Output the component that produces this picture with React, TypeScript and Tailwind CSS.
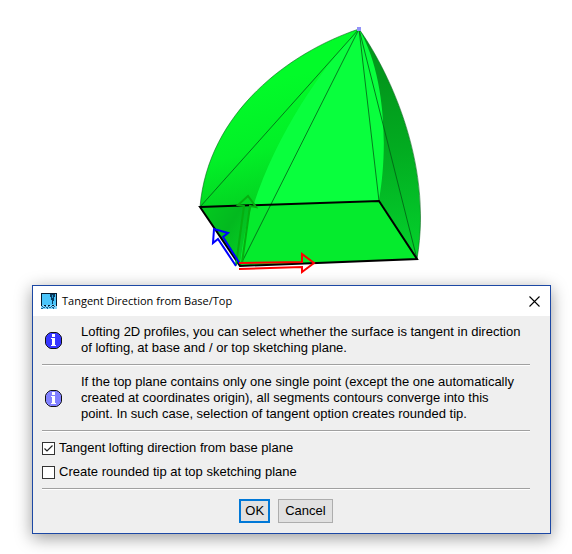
import type { ReactNode } from "react";

function LoftPreview() {
  return (
    <svg viewBox="0 0 572 285" className="block h-[285px] w-full" role="img" aria-label="Lofted solid">
      <defs>
        <linearGradient id="left" gradientUnits="userSpaceOnUse" x1="235" y1="90" x2="275" y2="245">
          <stop offset="0" stopColor="#02fb29" />
          <stop offset="0.4" stopColor="#02f027" />
          <stop offset="0.7" stopColor="#03d522" />
          <stop offset="1" stopColor="#03b01b" />
        </linearGradient>
        <linearGradient id="right" gradientUnits="userSpaceOnUse" x1="385" y1="80" x2="400" y2="250">
          <stop offset="0" stopColor="#02981c" />
          <stop offset="0.4" stopColor="#02ab20" />
          <stop offset="0.75" stopColor="#03c027" />
          <stop offset="1" stopColor="#04d02b" />
        </linearGradient>
        <linearGradient id="corner" gradientUnits="userSpaceOnUse" x1="205" y1="208" x2="248" y2="235">
          <stop offset="0" stopColor="#03c81f" />
          <stop offset="0.6" stopColor="#03b91f" />
          <stop offset="1" stopColor="#04c823" />
        </linearGradient>
      </defs>

      <path d="M359 29C290 52 208 112 200 207L240 266L320 200Z" fill="url(#left)" />
      <path d="M359 29C385 65 434 160 417 259L379 200L370 60Z" fill="url(#right)" />
      <path d="M200 207L240 266L262 205Z" fill="url(#corner)" />
      <path d="M359 29C310 80 250 175 240 266L417 259L379 200C388 150 386 75 359 29Z" fill="#09ff3d" />
      <path d="M252 205L379 201L417 259L240 266Q243 234 252 205Z" fill="#05eb2d" />

      <g fill="none" stroke="#045d15" strokeWidth="1" strokeOpacity="0.8">
        <path d="M359 29C290 52 208 112 200 207M359 29C385 65 434 160 417 259" strokeOpacity="0.55" />
        <path d="M359 29L200 207M359 29L240 266M359 29L379 201M359 29L417 259" />
      </g>
      <path d="M200 207L379 201L417 259L240 266Z" fill="none" stroke="#000" strokeWidth="2" />

      <path
        d="M236 265L244 206L238 205L248 196L256 207L250 206L242 263"
        fill="none"
        stroke="#06ae10"
        strokeWidth="2"
      />
      <path
        d="M236 266L218 239L213 243L214 229L228 233L223 237L240 264"
        fill="none"
        stroke="#00f"
        strokeWidth="2"
      />
      <path d="M239 263L302 262V254L314 263L302 272V267L239 269" fill="none" stroke="#f00" strokeWidth="2" />
      <path d="M357 27h4v4h-4z" fill="#9292f8" />
    </svg>
  );
}

function AppIcon() {
  return (
    <svg viewBox="0 0 16 16" className="size-4 shrink-0" aria-hidden="true" shapeRendering="crispEdges">
      <path d="M0 0h16v16H0z" fill="#061c30" />
      <path d="M1 1h14v11H1z" fill="#4bc5fa" />
      <path d="M0 13h1v-1h2v1h2v-1h2v1h2v-1h2v1h2v-1h2v1h1v3H0z" fill="#8ad6fa" />
      <path d="M1 13h1v1H1zM4 13h1v1H4zM7 13h1v1H7zM10 13h1v1h-1zM13 13h1v1h-1zM2 14h2v1H2zM5 14h2v1H5zM8 14h2v1H8zM11 14h2v1h-2zM0 15h2v1H0zM6 15h1v1H6zM12 15h1v1h-1z" fill="#146b9e" />
      <path d="M9 1h5v3h-1v4h-1v3h-1V7h-1V4H9z" fill="#083b60" />
      <path d="M11 2h1v3h-1z" fill="#279bd4" />
    </svg>
  );
}

function InfoIcon({ fill }: { fill: string }) {
  return (
    <svg viewBox="0 0 17 17" className="ml-[3px] size-[17px] shrink-0" aria-hidden="true">
      <path
        d="M5.5 .5h6l2 1 2 2 1 2v6l-1 2-2 2-2 1h-6l-2-1-2-2-1-2v-6l1-2 2-2z"
        fill={fill}
        stroke="#111"
      />
      <path d="M7 2h3v3H7zM6 6h4v7h1v1H6v-1h1V7H6z" fill="#fff" shapeRendering="crispEdges" />
    </svg>
  );
}

function Info({ fill, children }: { fill: string; children: ReactNode }) {
  return (
    <div className="mb-px flex items-center gap-[19px] border-b border-[#a0a0a0] py-2 shadow-[0_1px_0_#fff]">
      <InfoIcon fill={fill} />
      <p className="whitespace-nowrap">{children}</p>
    </div>
  );
}

function Option({ id, label, checked = false }: { id: string; label: string; checked?: boolean }) {
  return (
    <div className="flex h-6 items-center gap-1">
      <span className="grid size-[13px] shrink-0">
        <input
          id={id}
          type="checkbox"
          defaultChecked={checked}
          className="peer col-start-1 row-start-1 size-[13px] appearance-none border border-[#333] bg-white"
        />
        <svg
          viewBox="0 0 13 13"
          className="pointer-events-none invisible col-start-1 row-start-1 size-[13px] peer-checked:visible"
          aria-hidden="true"
        >
          <path d="M2.5 6.5L5 9L10.5 3.5" fill="none" stroke="#222" strokeWidth="1.2" />
        </svg>
      </span>
      <label htmlFor={id}>{label}</label>
    </div>
  );
}

export default function App() {
  return (
    <main className="bg-white pb-5 font-['Liberation_Sans',Arial,sans-serif] text-[13px] leading-4 text-black">
      <LoftPreview />
      <div className="pr-[21px] pl-8">
        <section
          role="dialog"
          aria-labelledby="dialog-title"
          className="border border-[#1c48a4] bg-[#efefef] shadow-[0_4px_16px_rgba(0,0,0,0.4)]"
        >
          <header className="flex h-[30px] items-center gap-[5px] bg-white px-2">
            <AppIcon />
            <h1 id="dialog-title" className="flex-1 font-['Open_Sans','Noto_Sans',sans-serif] text-[11px]">
              Tangent Direction from Base/Top
            </h1>
            <button type="button" aria-label="Close" className="p-0.5">
              <svg viewBox="0 0 11 11" className="size-[11px]" aria-hidden="true">
                <path d="M.5 .5l10 10M10.5 .5l-10 10" stroke="#000" strokeWidth="1.1" />
              </svg>
            </button>
          </header>

          <div className="pr-5 pb-[10px] pl-[9px]">
            <Info fill="#3636ff">
              Lofting 2D profiles, you can select whether the surface is tangent in direction
              <br />
              of lofting, at base and / or top sketching plane.
            </Info>
            <Info fill="#8080ff">
              If the top plane contains only one single point (except the one automatically
              <br />
              created at coordinates origin), all segments contours converge into this
              <br />
              point. In such case, selection of tangent option creates rounded tip.
            </Info>

            <div className="mb-px border-b border-[#a0a0a0] py-1 shadow-[0_1px_0_#fff]">
              <Option id="tangent" label="Tangent lofting direction from base plane" checked />
              <Option id="rounded" label="Create rounded tip at top sketching plane" />
            </div>

            <div className="flex justify-center gap-2 pt-[9px]">
              <button type="button" className="h-6 border-2 border-[#0078d7] bg-[#e1e1e1] px-1">
                OK
              </button>
              <button type="button" className="h-6 border border-[#adadad] bg-[#e1e1e1] px-1.5">
                Cancel
              </button>
            </div>
          </div>
        </section>
      </div>
    </main>
  );
}
